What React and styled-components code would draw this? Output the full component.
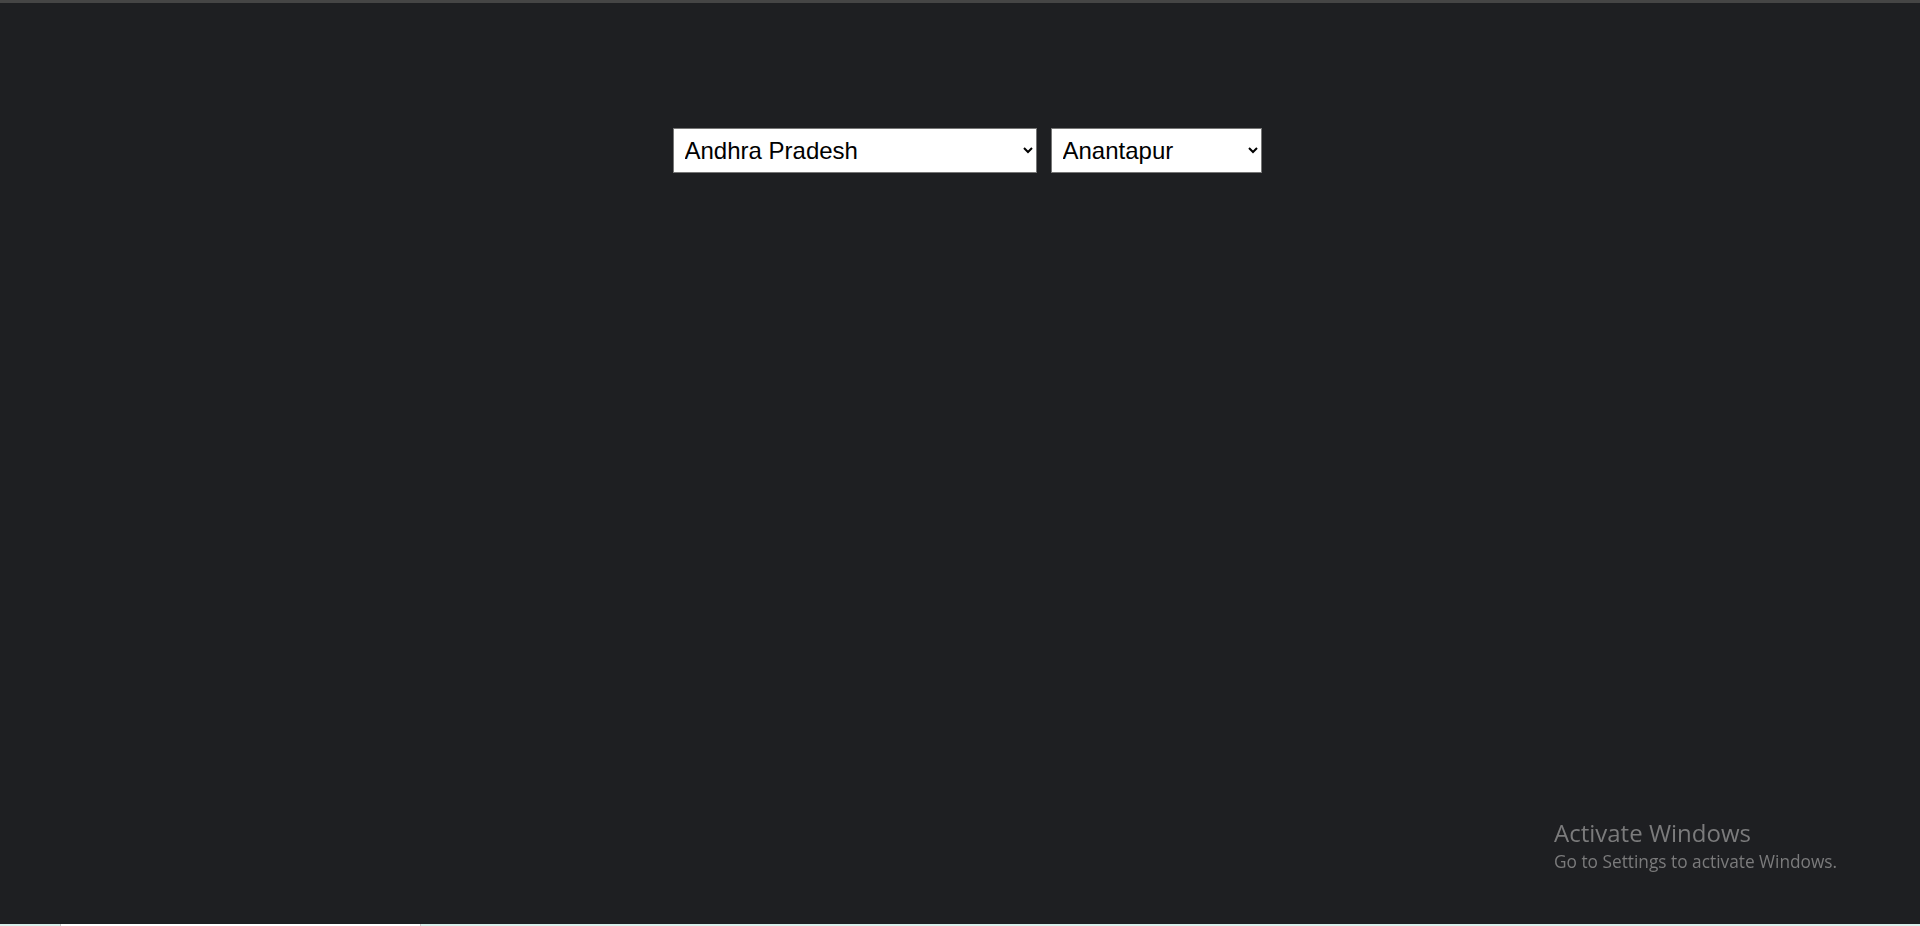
import React, { useState } from "react";
import styled, { createGlobalStyle } from "styled-components";

const GlobalStyle = createGlobalStyle`
    html, body {
        margin: 0;
        padding: 0;
        height: 100%;
        background-color: #1e1f22;
        overflow: hidden;
    }
    #root {
        min-height: 100vh;
    }
`

const Page = styled.div`
    min-height: 100vh;
    display: flex;
    flex-direction: column;
    background-color: #1e1f22;
    border-top: 3px solid #454545;
    box-sizing: border-box;
`

const SelectRow = styled.div`
    display: flex;
    justify-content: center;
    margin-top: 125px;
`

const Dropdown = styled.select`
    width: ${props => props.width}px;
    height: 45px;
    margin-left: 14px;
    padding: 0 6px 0 7px;
    font-family: "Liberation Sans", Arial, sans-serif;
    font-size: 24px;
    color: #000;
    background-color: #fff;
    border: 1px solid #767676;
    border-radius: 0;
    box-sizing: border-box;
    outline: none;
`

const Watermark = styled.div`
    position: fixed;
    left: 1554px;
    top: 818px;
    font-family: "Open Sans", "Noto Sans", sans-serif;
    color: #7b7b7c;
    pointer-events: none;
`

const WatermarkTitle = styled.div`
    font-size: 24px;
    line-height: 30px;
`

const WatermarkText = styled.div`
    font-size: 17.3px;
    line-height: 22px;
    margin-top: 3px;
`

const Taskbar = styled.div`
    position: fixed;
    left: 0;
    right: 0;
    bottom: 0;
    height: 2px;
    background-color: #d8f0ec;
    display: flex;
`

const TaskbarSearch = styled.div`
    margin-left: 60px;
    width: 359px;
    background-color: #ffffff;
    border-left: 1px solid #c8c8c8;
    border-right: 1px solid #c8c8c8;
`

const states = {
    "Andhra Pradesh": ["Anantapur", "Chittoor", "East Godavari", "Guntur", "Krishna", "Kurnool"],
    "Arunachal Pradesh": ["Tawang", "West Kameng"],
    "Assam": ["Baksa", "Barpeta"],
}

export default function App () {
    const [state, setState] = useState("Andhra Pradesh")
    const [district, setDistrict] = useState("Anantapur")

    return (
        <>
            <GlobalStyle />
            <Page>
                <SelectRow>
                    <Dropdown width={364} value={state} onChange={e => {
                        setState(e.target.value)
                        setDistrict(states[e.target.value][0])
                    }}>
                        {Object.keys(states).map(s => <option key={s}>{s}</option>)}
                    </Dropdown>
                    <Dropdown width={211} value={district} onChange={e => setDistrict(e.target.value)}>
                        {states[state].map(d => <option key={d}>{d}</option>)}
                    </Dropdown>
                </SelectRow>
            </Page>
            <Watermark>
                <WatermarkTitle>Activate Windows</WatermarkTitle>
                <WatermarkText>Go to Settings to activate Windows.</WatermarkText>
            </Watermark>
            <Taskbar>
                <TaskbarSearch />
            </Taskbar>
        </>
    )
}
